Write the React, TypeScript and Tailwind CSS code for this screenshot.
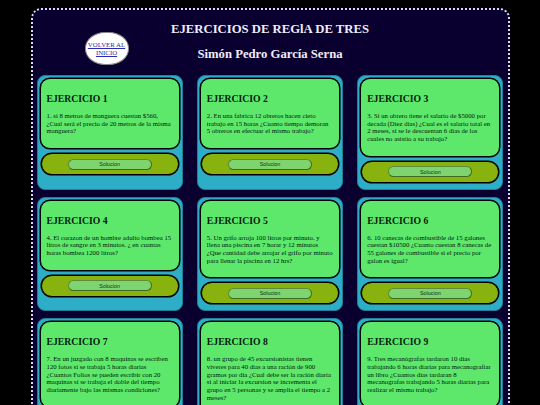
const items = [
  { t: "EJERCICIO 1", b: "1. si 8 metros de manguera cuestan $560, ¿Cual será el precio de 20 metros de la misma manguera?" },
  { t: "EJERCICIO 2", b: "2. En una fabrica 12 obreros hacen cieto trabajo en 15 horas ¿Cuanto tiempo demoran 5 obreros en efectuar el mismo trabajo?" },
  { t: "EJERCICIO 3", b: "3. Si un obrero tiene el salario de $5000 por decada (Diez dias) ¿Cual es el salario total en 2 meses, si se le descuentan 6 dias de los cuales no asistio a su trabajo?" },
  { t: "EJERCICIO 4", b: "4. El corazon de un hombre adulto bombea 15 litros de sangre en 3 minutos. ¿ en cuantas horas bombea 1200 litros?" },
  { t: "EJERCICIO 5", b: "5. Un grifo arroja 100 litros por minuto. y llena una piscina en 7 horar y 12 minutos ¿Que cantidad debe arrojar el grifo por minuto para llenar la piscina en 12 hrs?" },
  { t: "EJERCICIO 6", b: "6. 10 canecas de combustible de 15 galones cuestan $10500 ¿Cuanto cuestan 8 canecas de 55 galones de combustible si el precio por galon es igual?" },
  { t: "EJERCICIO 7", b: "7. En un juzgado con 8 maquinas se escriben 120 fotos si se trabaja 5 horas diarias ¿Cuantos Folios se pueden escribir con 20 maquinas si se trabaja el doble del tiempo diariamente bajo las mismas condiciones?" },
  { t: "EJERCICIO 8", b: "8. un grupo de 45 excursionistas tienen viveres para 40 dias a una ración de 900 gramos por dia ¿Cual debe ser la ración diaria si al iniciar la excursion se incrementa el grupo en 5 personas y se amplia el tiempo a 2 meses?" },
  { t: "EJERCICIO 9", b: "9. Tres mecanógrafas tardaron 10 dias trabajando 6 horas diarias para mecanografiar un libro ¿Cuantos dias tardaran 8 mecanografas trabajando 5 horas diarias para realizar el mismo trabajo?" },
];

export default function App() {
  return (
    <div className="h-[405px] overflow-hidden bg-black pt-2 font-['Liberation_Serif',serif]">
      <div className="mx-auto w-[479px] rounded-t-[10px] border-2 border-b-0 border-dotted border-[#dcd8f2] bg-[#0a0030] px-[4px] pb-4">
        <div className="grid h-[65px] grid-cols-[52px_1fr_52px] text-[#efecfa]">
          <div className="pt-[22px] pl-[48px]">
            <a
              href="#"
              className="flex h-[33px] w-[44px] items-center justify-center rounded-[20px/16px] border border-[#888] bg-white text-center text-[6.8px] leading-[7.7px] text-[#2a2ab4] underline"
            >
              VOLVER AL INICIO
            </a>
          </div>
          <div className="text-center font-bold">
            <div className="pt-[11px] text-[12.7px] leading-[16px]">EJERCICIOS DE REGlA DE TRES</div>
            <div className="pt-[9px] text-[12.7px] leading-[16px]">Simón Pedro García Serna</div>
          </div>
          <div />
        </div>
        <div className="grid grid-cols-3 gap-x-[14px] gap-y-[7px]">
          {items.map((it) => (
            <div key={it.t} className="rounded-[8px] border border-[#1f7f97] bg-[#2eaec6] px-[2px] pt-[2px] pb-[6px]">
              <div className="rounded-[10px] border border-black bg-[#5de86c] px-[6px] pt-[14px] pb-[13px] text-[#02210a] shadow-[0_0_0_0.5px_#000]">
                <h2 className="text-[9.7px] leading-[11px] font-bold">{it.t}</h2>
                <p className="mt-[8px] text-[6.75px] leading-[7.67px]">{it.b}</p>
              </div>
              <div className="mx-[1px] mt-[4px] flex h-[22px] items-center justify-center rounded-[11px] border border-black bg-[#88b20e] shadow-[0_0_0_0.5px_#000]">
                <button className="flex h-[11px] w-[84px] items-center justify-center rounded-[6px] border border-[#5f8a3c] border-r-[#3f6a25] border-b-[#3f6a25] bg-[#7ed56f] font-['Liberation_Sans',sans-serif] text-[5.4px] text-[#10300f]">
                  Solucion
                </button>
              </div>
            </div>
          ))}
        </div>
      </div>
    </div>
  );
}
